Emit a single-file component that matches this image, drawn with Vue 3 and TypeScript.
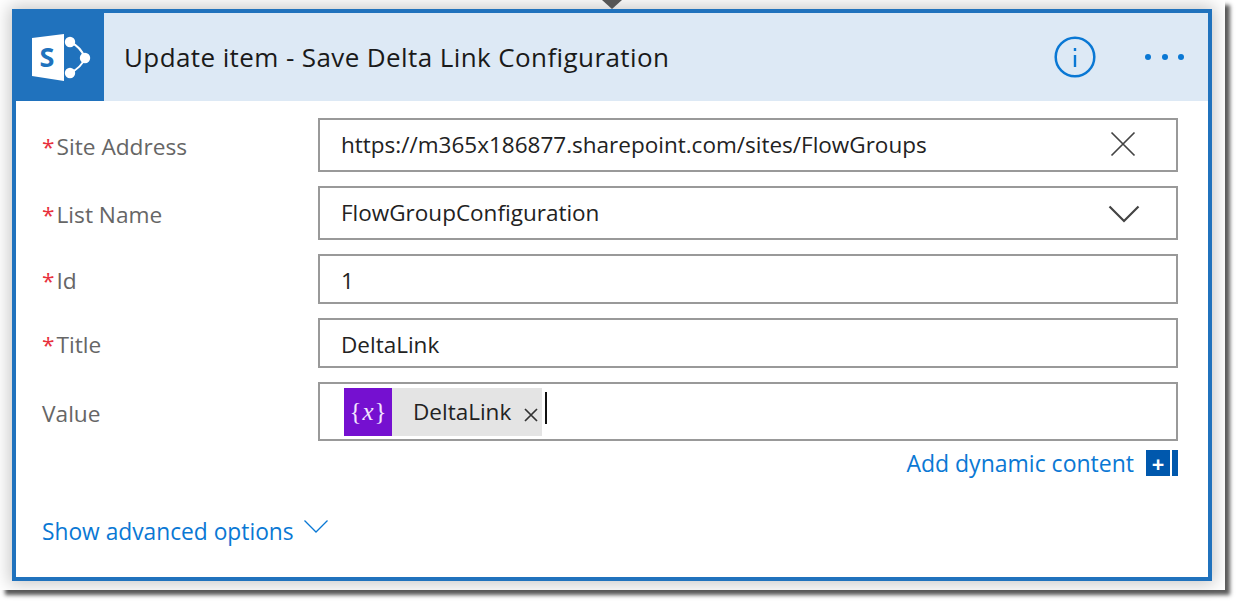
<script setup lang="ts">
interface Field {
  label: string
  value: string
  required: boolean
  size: string
  icon?: 'close' | 'chevron'
}
const fields: Field[] = [
  { label: 'Site Address', value: 'https://m365x186877.sharepoint.com/sites/FlowGroups', required: true, size: 'tall', icon: 'close' },
  { label: 'List Name', value: 'FlowGroupConfiguration', required: true, size: 'tall', icon: 'chevron' },
  { label: 'Id', value: '1', required: true, size: 'short' },
  { label: 'Title', value: 'DeltaLink', required: true, size: 'short' },
]
</script>

<template>
  <div class="page">
    <div class="frame">
      <div class="card">
        <span class="pointer"></span>
        <header class="head">
          <div class="logo">
            <svg width="60" height="48" viewBox="0 0 60 48">
              <path d="M1 4 L33 0 V47 L1 42 Z" fill="#fff" />
              <circle cx="39" cy="8" r="5.200" fill="#fff" />
              <circle cx="54" cy="24" r="5.200" fill="#fff" />
              <circle cx="39" cy="39" r="5.200" fill="#fff" />
              <path d="M39 8 Q50 13 54 24 Q50 34 39 39" fill="none" stroke="#fff" stroke-width="2" />
              <text x="16" y="33" class="logo-s">S</text>
            </svg>
          </div>
          <h1 class="title">Update item - Save Delta Link Configuration</h1>
          <div class="actions">
            <svg class="info" width="42" height="42" viewBox="0 0 42 42">
              <circle cx="21" cy="21" r="19.300" fill="none" stroke="#0a78d4" stroke-width="2.500" />
              <rect x="19.800" y="19" width="2.400" height="12" fill="#0a78d4" />
              <rect x="19.800" y="12" width="2.400" height="3" fill="#0a78d4" />
            </svg>
            <div class="dots"><i></i><i></i><i></i></div>
          </div>
        </header>
        <div class="body">
          <div v-for="f in fields" :key="f.label" class="row" :class="f.size">
            <label class="label"><span class="star">*</span>{{ f.label }}</label>
            <div class="input">
              <span class="val">{{ f.value }}</span>
              <svg v-if="f.icon === 'close'" class="end close" width="26" height="26" viewBox="0 0 26 26">
                <path d="M1.500 1.500 L24.500 24.500 M24.500 1.500 L1.500 24.500" stroke="#444" stroke-width="1.700" fill="none" />
              </svg>
              <svg v-if="f.icon === 'chevron'" class="end chev" width="32" height="18" viewBox="0 0 32 18">
                <path d="M1.500 1.500 L16 16 L30.500 1.500" stroke="#444" stroke-width="2.200" fill="none" />
              </svg>
            </div>
          </div>
          <div class="row value">
            <label class="label">Value</label>
            <div class="input chip-input">
              <div class="chip">
                <span class="fx"><span>{</span><i>x</i><span>}</span></span>
                <span class="chip-text">DeltaLink</span>
                <svg class="chip-x" width="14" height="14" viewBox="0 0 14 14">
                  <path d="M1 1 L13 13 M13 1 L1 13" stroke="#333" stroke-width="1.700" fill="none" />
                </svg>
              </div>
              <span class="caret"></span>
            </div>
          </div>
          <div class="dynamic">
            <a class="link">Add dynamic content</a>
            <span class="plus">+</span>
            <span class="plus-bar"></span>
          </div>
          <div class="advanced">
            <a class="link adv">Show advanced options</a>
            <svg width="24" height="13" viewBox="0 0 24 13">
              <path d="M0.500 0.500 L12 12 L23.500 0.500" stroke="#0a78d4" stroke-width="1.300" fill="none" />
            </svg>
          </div>
        </div>
      </div>
    </div>
  </div>
</template>

<style>
html, body { background: #fff; margin: 0; }
</style>

<style scoped>
.page {
  width: 1240px;
  height: 605px;
  overflow: hidden;
  background: #fff;
}
.frame {
  box-sizing: border-box;
  width: 1225px;
  height: 590px;
  padding: 9px 13px 9px 12px;
  background: #fff;
  box-shadow: 5px 5px 4px #5c5c5c;
  font-family: "Open Sans", "Noto Sans", sans-serif;
}
.card {
  position: relative;
  box-sizing: border-box;
  height: 572px;
  border: 4px solid #2072bd;
  background: #fff;
  box-shadow: 0 0 16px 3px rgba(0, 0, 0, 0.22);
}
.pointer {
  position: absolute;
  left: 586px;
  top: -13px;
  border-left: 10px solid transparent;
  border-right: 10px solid transparent;
  border-top: 9px solid #555;
}
.head {
  display: flex;
  align-items: center;
  height: 88px;
  background: #dde9f5;
}
.logo {
  display: flex;
  align-items: center;
  justify-content: center;
  width: 88px;
  height: 88px;
  background: #2072bd;
}
.logo svg { margin: 1px 0 0 2px; }
.logo-s {
  font: 700 27px "Open Sans", sans-serif;
  fill: #2072bd;
  text-anchor: middle;
}
.title {
  margin: 0 0 0 20px;
  font-size: 26px;
  font-weight: 400;
  letter-spacing: 0.4px;
  color: #1a1a1a;
  flex: 1;
}
.actions {
  display: flex;
  align-items: center;
  gap: 49px;
  padding-right: 24px;
}
.dots { display: flex; gap: 10.500px; }
.dots i {
  width: 6px;
  height: 6px;
  border-radius: 50%;
  background: #0a78d4;
}
.body { padding: 17px 30px 0 26px; }
.row {
  display: flex;
  align-items: center;
  margin-bottom: 14px;
}
.label {
  width: 276px;
  padding-top: 2px;
  font-size: 22.700px;
  color: #666;
}
.value .label { padding-top: 4px; }
.star { color: #e8303c; margin-right: 2px; }
.input {
  box-sizing: border-box;
  flex: 1;
  display: flex;
  align-items: center;
  justify-content: space-between;
  border: 2px solid #999;
  padding: 0 20px 0 21px;
  font-size: 22.500px;
  color: #222;
}
.tall .input { height: 54px; }
.tall .val { margin-top: -2px; }
.short .input { height: 50px; }
.short .val { margin-top: 2px; }
.value { margin-bottom: 10px; }
.chip-input {
  height: 59px;
  justify-content: flex-start;
  padding: 0 0 0 24px;
}
.close { margin-right: 20px; margin-top: -2px; }
.chev { margin-right: 16px; margin-top: 2px; }
.chip {
  display: flex;
  align-items: center;
  height: 48px;
  background: #e4e4e4;
}
.fx {
  display: flex;
  align-items: center;
  justify-content: center;
  width: 48px;
  height: 48px;
  background: #7510d0;
  color: #f3e6ff;
  font-family: "Liberation Serif", serif;
  font-size: 25px;
  gap: 1px;
}
.fx i { font-style: italic; }
.chip-text { margin-left: 21px; }
.chip-x { margin: 6px 4px 0 13px; }
.caret {
  width: 2px;
  height: 32px;
  margin: -8px 0 0 3px;
  background: #111;
}
.dynamic {
  display: flex;
  align-items: center;
  justify-content: flex-end;
  height: 24px;
}
.link {
  font-size: 23px;
  color: #0a78d4;
}
.adv { font-size: 22.750px; }
.plus {
  display: flex;
  align-items: center;
  justify-content: center;
  width: 24px;
  height: 26px;
  margin-left: 12px;
  background: #0058ad;
  color: #fff;
  font-weight: 700;
  font-size: 22px;
}
.plus-bar {
  width: 6px;
  height: 26px;
  margin-left: 2px;
  background: #0058ad;
}
.advanced {
  display: flex;
  align-items: flex-start;
  gap: 10px;
  margin-top: 41px;
}
.advanced svg { margin-top: 4px; }
</style>
